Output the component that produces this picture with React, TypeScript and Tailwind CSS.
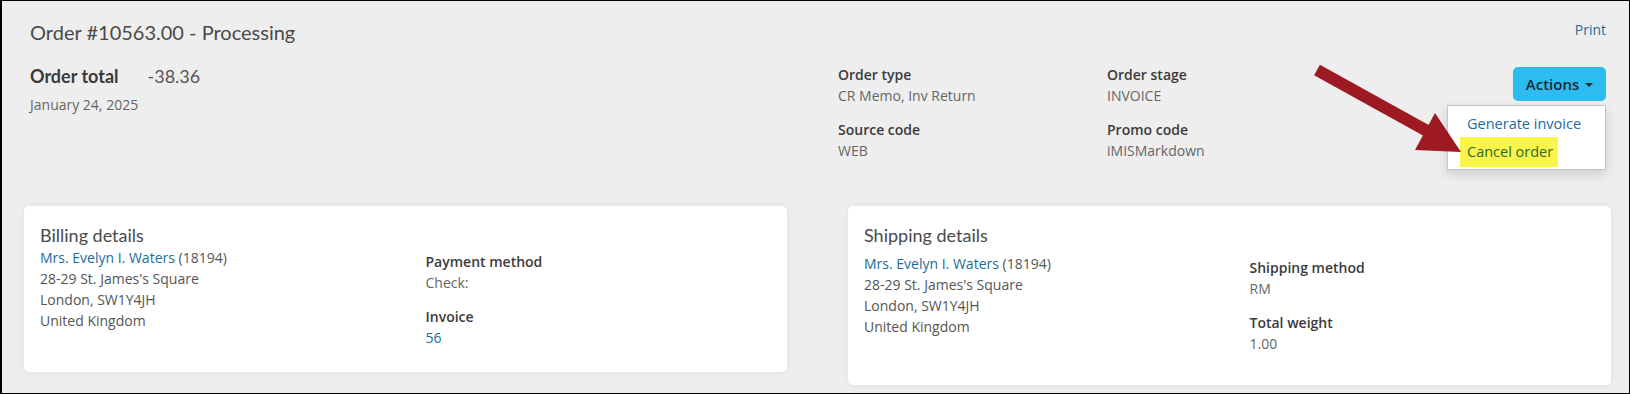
import React from "react";

interface FieldProps {
  label: string;
  value: string;
  link?: boolean;
}

const Field: React.FC<FieldProps> = ({ label, value, link }) => {
  return (
    <div className="mb-[14px]">
      <div className="font-semibold text-[#3b3b3b] leading-[20px]">{label}</div>
      <div className={link ? "text-[#1b6c9c] leading-[21px]" : "text-[#666666] leading-[21px]"}>
        {value}
      </div>
    </div>
  );
};

interface DetailsCardProps {
  heading: string;
  fields: FieldProps[];
  tall?: boolean;
}

const DetailsCard: React.FC<DetailsCardProps> = ({ heading, fields, tall }) => {
  return (
    <div
      className={
        tall
          ? "flex-1 bg-white rounded-[5px] shadow-[0_0_6px_rgba(0,0,0,0.07)] px-4 pt-[17px] pb-[17px] grid grid-cols-2 gap-x-10"
          : "flex-1 bg-white rounded-[5px] shadow-[0_0_6px_rgba(0,0,0,0.07)] px-4 pt-[17px] pb-[10px] grid grid-cols-2 gap-x-10"
      }
    >
      <div>
        <div className="font-['Lato'] text-[18px] leading-[24px] text-[#4a4a4a]">{heading}</div>
        <div className={tall ? "mt-[6px] leading-[21px] text-[#555555]" : "leading-[21px] text-[#555555]"}>
          <div>
            <span className="text-[#1b6c9c]">Mrs. Evelyn I. Waters</span> (18194)
          </div>
          <div>28-29 St. James's Square</div>
          <div>London, SW1Y4JH</div>
          <div>United Kingdom</div>
        </div>
      </div>
      <div className={tall ? "pt-[35px]" : "pt-[29px]"}>
        {fields.map((f) => (
          <Field key={f.label} {...f} />
        ))}
      </div>
    </div>
  );
};

export default function App() {
  return (
    <div className="relative w-[1630px] h-[394px] overflow-hidden bg-[#eeeeee] border border-black border-l-2 font-['Open_Sans',sans-serif] text-[14px]">
      <div className="pl-[28px] pr-[23px] pt-[17px]">
        <div className="flex justify-between items-start">
          <h1 className="font-['Lato'] text-[20px] leading-[28px] text-[#4a4a4a]">
            Order #10563.00 - Processing
          </h1>
          <a className="text-[#1b6c9c] text-[14px] leading-[20px] pt-[2px]">Print</a>
        </div>
        <div className="flex mt-[18px]">
          <div className="w-[808px]">
            <div className="flex items-baseline font-['Lato'] text-[18px] leading-[24px] text-[#3b3b3b]">
              <span className="font-bold">Order total</span>
              <span className="ml-[29px] text-[#555555]">-38.36</span>
            </div>
            <div className="mt-[7px] text-[#666666] leading-[20px]">January 24, 2025</div>
          </div>
          <div className="w-[269px] pt-[1px]">
            <Field label="Order type" value="CR Memo, Inv Return" />
            <Field label="Source code" value="WEB" />
          </div>
          <div className="w-[269px] pt-[1px]">
            <Field label="Order stage" value="INVOICE" />
            <Field label="Promo code" value="iMISMarkdown" />
          </div>
          <div className="relative flex-1 flex justify-end pt-[3px]">
            <button className="h-[34px] w-[93px] rounded-[5px] bg-[#2cbcf1] text-[#1e2a33] text-[15px] font-semibold flex items-center justify-center gap-[6px]">
              Actions
              <span className="w-0 h-0 border-l-[4px] border-r-[4px] border-t-[4px] border-l-transparent border-r-transparent border-t-[#1e2a33] mt-[2px]"></span>
            </button>
            <div className="absolute right-0 top-[41px] w-[159px] h-[65px] bg-white border border-[#c6c6c6] shadow-[0_4px_10px_rgba(0,0,0,0.15)] pt-[8px] px-[12px]">
              <div className="whitespace-nowrap text-[#1b6c9c] text-[14.5px] leading-[20px] px-[7px]">Generate invoice</div>
              <div className="whitespace-nowrap mt-[3px] bg-[#faf54b] text-[#2c6a2c] text-[14.5px] leading-[30px] px-[7px] w-[98px]">
                Cancel order
              </div>
            </div>
          </div>
        </div>
      </div>
      <div className="flex gap-[61px] pl-[22px] pr-[18px] mt-[31px] items-start">
        <DetailsCard
          heading="Billing details"
          fields={[
            { label: "Payment method", value: "Check:" },
            { label: "Invoice", value: "56", link: true },
          ]}
        />
        <DetailsCard
          heading="Shipping details"
          tall
          fields={[
            { label: "Shipping method", value: "RM" },
            { label: "Total weight", value: "1.00" },
          ]}
        />
      </div>
      <svg className="absolute left-0 top-0 pointer-events-none" width="1630" height="394">
        <line x1="1315" y1="69" x2="1427" y2="131" stroke="#9e1a22" strokeWidth="12" />
        <polygon points="1433,112 1413,149 1459,151" fill="#9e1a22" />
      </svg>
    </div>
  );
}
